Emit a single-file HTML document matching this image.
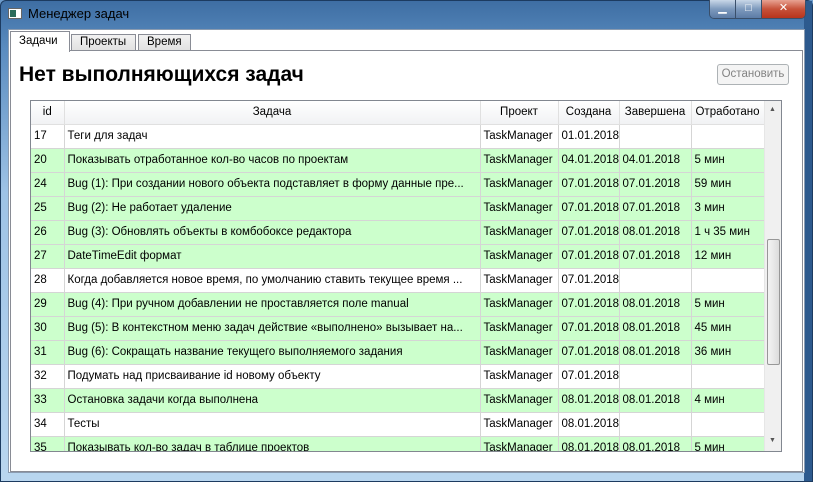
<!DOCTYPE html>
<html><head><meta charset="utf-8"><style>
*{margin:0;padding:0;box-sizing:border-box}
body{width:813px;height:482px;overflow:hidden;background:#6d9ccc;font-family:"Liberation Sans","DejaVu Sans",sans-serif;font-size:12px;color:#000;position:relative}
.frame{position:absolute;left:0;top:0;width:813px;height:482px;background:linear-gradient(180deg,#3e6ea3 0,#5a8cc0 10%,#9ec3e6 40%,#b9d6ef 100%);border:1px solid #1c3b60;border-radius:6px 6px 0 0}
.frame:after{content:"";position:absolute;right:0;top:0;width:8px;height:100%;background:#2d5a8e}
.title{position:absolute;left:28px;top:6px;font-size:13px;color:#000}
.ico{position:absolute;left:8px;top:8px;width:14px;height:11px;background:#fff;border:1px solid #666}
.ico:before{content:"";position:absolute;left:1px;top:1px;width:6px;height:7px;background:#2a6b5a}
.btns{position:absolute;right:7px;top:0;height:19px;display:flex;border:1px solid #3a4f6a;border-top:none;border-radius:0 0 5px 5px;overflow:hidden}
.btns div{height:18px;color:#fff;font-size:11px;text-align:center;line-height:17px;font-weight:bold}
.b1,.b2{width:26px;background:linear-gradient(#c9d7e8,#7e9abd 50%,#5c7ca6);border-right:1px solid #3a4f6a}
.b3{width:43px;background:linear-gradient(#e8a393,#c7523a 50%,#b8341c)}
.client{position:absolute;left:8px;top:29px;width:797px;height:444px;background:#fff;border:1px solid #8a9bb0}
.panel{position:absolute;left:1px;top:20px;width:793px;height:422px;border:1px solid #898c95;background:#fff}
.tab{position:absolute;top:4px;height:17px;border:1px solid #898c95;border-bottom:none;background:linear-gradient(#f2f2f2,#e0e0e0);font-size:11.5px;line-height:15px;padding:0 8px}
.tab.sel{top:1px;height:21px;background:#fff;z-index:2;padding-top:2px}
h1{position:absolute;left:19px;top:62px;font-size:21px;font-weight:bold;line-height:26px}
.stop{position:absolute;left:717px;top:64px;width:72px;height:21px;border:1px solid #adb2b5;border-radius:3px;background:#f4f4f4;color:#838383;text-align:center;line-height:19px;font-size:11.5px}
.grid{position:absolute;left:30px;top:100px;width:752px;height:352px;border:1px solid #828790;overflow:hidden;background:#fff}
table{border-collapse:collapse;table-layout:fixed;position:absolute;left:0;top:0;width:733px;font-size:11.5px}
td,th{height:24px;border-right:1px solid #d5d5d5;border-bottom:1px solid #d5d5d5;padding-left:3px;white-space:nowrap;overflow:hidden;font-weight:normal;text-align:left}
th{height:23px;background:linear-gradient(#fff,#f1f2f4);text-align:center;padding:0;border-color:#e0e0e0}
tr.g td{background:#ccffcc}
.sb{position:absolute;right:0;top:0;width:17px;height:350px;background:#f0f0f0;border-left:1px solid #e6e6e6}
.thumb{position:absolute;left:2px;top:138px;width:13px;height:126px;border:1px solid #979797;border-radius:2px;background:linear-gradient(90deg,#f3f3f3,#dcdcdc)}
.arr{position:absolute;left:4px;font-size:7px;color:#555}
</style></head><body>
<div class="frame"></div>
<div class="ico"></div>
<div class="title">Менеджер задач</div>
<div class="btns"><div class="b1">▁</div><div class="b2">□</div><div class="b3">✕</div></div>
<div class="client">
<div class="tab sel" style="left:1px;width:60px">Задачи</div>
<div class="tab" style="left:62px;width:65px">Проекты</div>
<div class="tab" style="left:129px;width:53px">Время</div>
<div class="panel"></div>
</div>
<h1>Нет выполняющихся задач</h1>
<div class="stop">Остановить</div>
<div class="grid">
<table>
<colgroup><col style="width:33px"><col style="width:416px"><col style="width:78px"><col style="width:61px"><col style="width:72px"><col style="width:73px"></colgroup>
<tr><th>id</th><th>Задача</th><th>Проект</th><th>Создана</th><th>Завершена</th><th>Отработано</th></tr>
<tr><td>17</td><td>Теги для задач</td><td>TaskManager</td><td>01.01.2018</td><td></td><td></td></tr>
<tr class="g"><td>20</td><td>Показывать отработанное кол-во часов по проектам</td><td>TaskManager</td><td>04.01.2018</td><td>04.01.2018</td><td>5 мин</td></tr>
<tr class="g"><td>24</td><td>Bug (1): При создании нового объекта подставляет в форму данные пре...</td><td>TaskManager</td><td>07.01.2018</td><td>07.01.2018</td><td>59 мин</td></tr>
<tr class="g"><td>25</td><td>Bug (2): Не работает удаление</td><td>TaskManager</td><td>07.01.2018</td><td>07.01.2018</td><td>3 мин</td></tr>
<tr class="g"><td>26</td><td>Bug (3): Обновлять объекты в комбобоксе редактора</td><td>TaskManager</td><td>07.01.2018</td><td>08.01.2018</td><td>1 ч 35 мин</td></tr>
<tr class="g"><td>27</td><td>DateTimeEdit формат</td><td>TaskManager</td><td>07.01.2018</td><td>07.01.2018</td><td>12 мин</td></tr>
<tr><td>28</td><td>Когда добавляется новое время, по умолчанию ставить текущее время ...</td><td>TaskManager</td><td>07.01.2018</td><td></td><td></td></tr>
<tr class="g"><td>29</td><td>Bug (4): При ручном добавлении не проставляется поле manual</td><td>TaskManager</td><td>07.01.2018</td><td>08.01.2018</td><td>5 мин</td></tr>
<tr class="g"><td>30</td><td>Bug (5): В контекстном меню задач действие «выполнено» вызывает на...</td><td>TaskManager</td><td>07.01.2018</td><td>08.01.2018</td><td>45 мин</td></tr>
<tr class="g"><td>31</td><td>Bug (6): Сокращать название текущего выполняемого задания</td><td>TaskManager</td><td>07.01.2018</td><td>08.01.2018</td><td>36 мин</td></tr>
<tr><td>32</td><td>Подумать над присваивание id новому объекту</td><td>TaskManager</td><td>07.01.2018</td><td></td><td></td></tr>
<tr class="g"><td>33</td><td>Остановка задачи когда выполнена</td><td>TaskManager</td><td>08.01.2018</td><td>08.01.2018</td><td>4 мин</td></tr>
<tr><td>34</td><td>Тесты</td><td>TaskManager</td><td>08.01.2018</td><td></td><td></td></tr>
<tr class="g"><td>35</td><td>Показывать кол-во задач в таблице проектов</td><td>TaskManager</td><td>08.01.2018</td><td>08.01.2018</td><td>5 мин</td></tr>
</table>
<div class="sb"><div class="arr" style="top:5px">▲</div><div class="thumb"></div><div class="arr" style="top:336px">▼</div></div>
</div>
</body></html>
